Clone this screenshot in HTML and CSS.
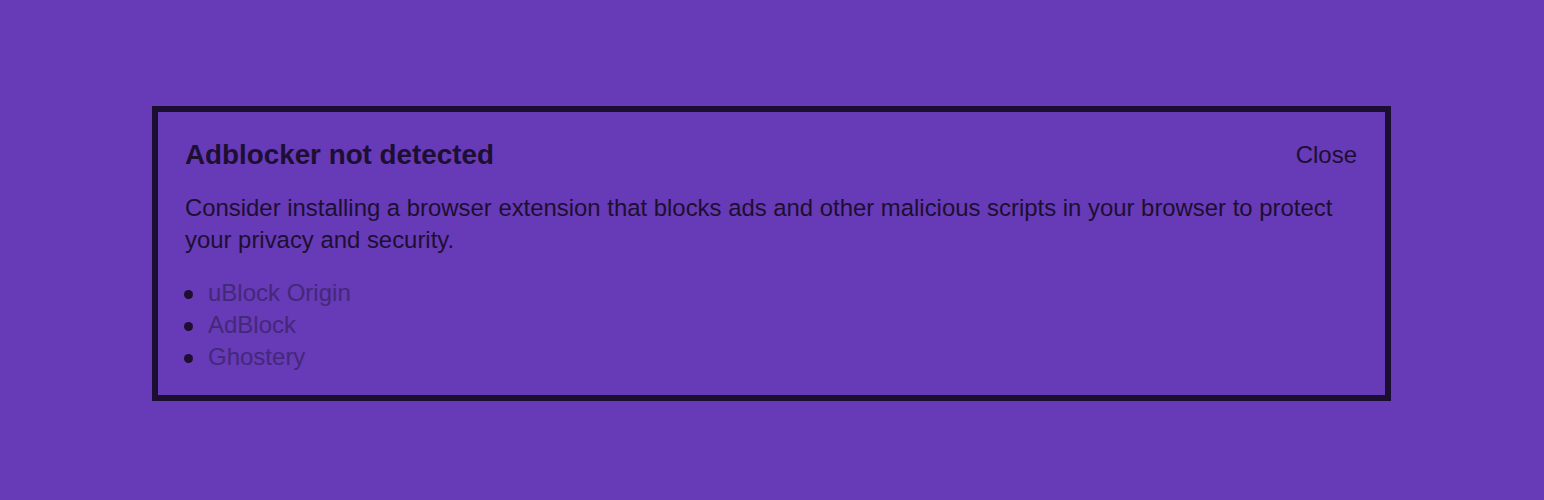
FILE: index.html
```
<!DOCTYPE html>
<html lang="en">
<head>
<meta charset="utf-8">
<title>Adblocker not detected</title>
<link rel="stylesheet" href="styles.css">
</head>
<body>
<div class="page">
  <section class="notice">
    <div class="notice-head">
      <h2 class="notice-title">Adblocker not detected</h2>
      <button class="notice-close" type="button">Close</button>
    </div>
    <p class="notice-text">Consider installing a browser extension that blocks ads and other malicious scripts in your browser to protect your privacy and security.</p>
    <ul class="notice-list">
      <li><a href="#">uBlock Origin</a></li>
      <li><a href="#">AdBlock</a></li>
      <li><a href="#">Ghostery</a></li>
    </ul>
  </section>
</div>
</body>
</html>
```
FILE: styles.css
```
html, body {
  margin: 0;
  padding: 0;
  background: #673ab7;
}
body {
  font-family: "Liberation Sans", Arial, Helvetica, sans-serif;
  color: #1d0f31;
}
.page {
  padding: 106px 153px 0 152px;
}
.notice {
  border: 6px solid #1c0e30;
  padding: 27px 28px 20px 27px;
  box-sizing: border-box;
  height: 295px;
}
.notice-head {
  display: flex;
  justify-content: space-between;
  align-items: center;
}
.notice-title {
  margin: 0;
  font-size: 27.8px;
  line-height: 32px;
  font-weight: bold;
}
.notice-close {
  background: none;
  border: 0;
  padding: 0;
  font: inherit;
  font-size: 24px;
  line-height: 32px;
  color: #1d0f31;
  cursor: pointer;
}
.notice-text {
  margin: 21px 0 0;
  font-size: 23.9px;
  line-height: 32px;
}
.notice-list {
  margin: 21px 0 0;
  padding: 0;
  list-style: none;
  font-size: 24px;
  line-height: 32px;
}
.notice-list li {
  display: flex;
  align-items: flex-start;
}
.notice-list li::before {
  content: "";
  flex: none;
  width: 9px;
  height: 9px;
  border-radius: 50%;
  background: #1d0f31;
  margin: 13px 15px 0 -1px;
}
.notice-list a {
  color: #442879;
  text-decoration: none;
}
```
